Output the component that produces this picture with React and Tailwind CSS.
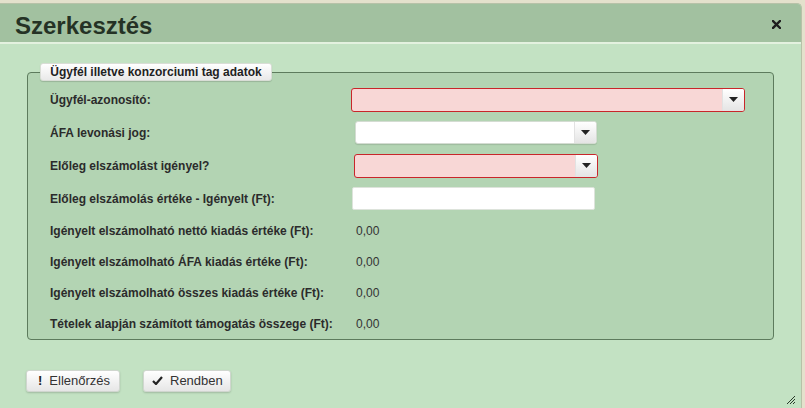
import React from "react";

const font = { fontFamily: '"Liberation Sans", Arial, sans-serif' };

function Caret() {
  return (
    <svg width="9" height="5" viewBox="0 0 9 5">
      <path d="M0 0 L9 0 L4.5 5 Z" fill="#222" />
    </svg>
  );
}

function Select({ invalid, className }) {
  return (
    <div
      className={`flex items-stretch rounded-[3px] border ${
        invalid
          ? "border-[#c8262a] bg-[#f8d7d6]"
          : "border-[#d4dcd2] bg-white shadow-[0_1px_1px_rgba(0,0,0,0.12)]"
      } ${className}`}
    >
      <div className="flex-1" />
      <div className="flex w-[22px] items-center justify-center rounded-r-[2px] border-l border-[#e2e2e2] bg-gradient-to-b from-[#ffffff] to-[#e4e4e4]">
        <Caret />
      </div>
    </div>
  );
}

function Row({ label, children, h }) {
  return (
    <div className={`flex items-center ${h}`}>
      <div className="w-[301px] shrink-0 text-[12px] font-bold text-[#2b2b2b]">{label}</div>
      {children}
    </div>
  );
}

function Btn({ icon, label, className }) {
  return (
    <div
      className={`flex h-[22px] items-center rounded-[3px] border border-[#d0d6cf] bg-gradient-to-b from-[#ffffff] to-[#e6e6e6] text-[13px] text-[#333] shadow-[0_1px_2px_rgba(0,0,0,0.18)] ${className}`}
    >
      {icon}
      <span>{label}</span>
    </div>
  );
}

export default function App() {
  return (
    <div className="h-[408px] w-[805px] overflow-hidden bg-[#e4e1cc] pt-[3px]" style={font}>
      <div className="relative h-[405px] w-[802px] overflow-hidden rounded-tr-[5px] border-r border-t border-[#b7c2a8] bg-[#c3e2c3]">
        {/* header */}
        <div className="flex h-[40px] items-center justify-between border-b-2 border-[#e3f1df] bg-[#a2c1a0] pl-[15px] pr-[20px]">
          <div className="mt-[6px] text-[24px] font-bold leading-none text-[#253225]">Szerkesztés</div>
          <svg width="9" height="9" viewBox="0 0 9 9" className="mt-[2px]">
            <path d="M1 1 L8 8 M8 1 L1 8" stroke="#1f1f1f" strokeWidth="2.4" strokeLinecap="square" />
          </svg>
        </div>

        {/* body */}
        <div className="px-[27px] pt-[28px]">
          <div className="relative w-[747px] rounded-[4px] border border-[#5d7b5d] bg-[#b3d4b3] pl-[22px] pt-[10px]">
            <div className="absolute left-[12px] top-[-10px] flex h-[18px] w-[232px] items-center justify-center whitespace-nowrap rounded-[3px] border border-[#d9ddd6] bg-gradient-to-b from-[#ffffff] to-[#e9e9e9] text-[12px] font-bold text-[#222] shadow-[0_1px_1px_rgba(0,0,0,0.15)]">
              Ügyfél illetve konzorciumi tag adatok
            </div>

            <Row label="Ügyfél-azonosító:" h="h-[33px]">
              <Select invalid className="h-[24px] w-[394px]" />
            </Row>
            <Row label="ÁFA levonási jog:" h="h-[33px]">
              <Select className="ml-[4px] h-[23px] w-[242px]" />
            </Row>
            <Row label="Előleg elszámolást igényel?" h="h-[33px]">
              <Select invalid className="ml-[3px] h-[24px] w-[244px]" />
            </Row>
            <Row label="Előleg elszámolás értéke - Igényelt (Ft):" h="h-[33px]">
              <div className="ml-[1px] h-[23px] w-[243px] rounded-[2px] border border-[#dde3db] bg-white" />
            </Row>
            <Row label="Igényelt elszámolható nettó kiadás értéke (Ft):" h="h-[31px]">
              <span className="ml-[5px] text-[12px] text-[#333]">0,00</span>
            </Row>
            <Row label="Igényelt elszámolható ÁFA kiadás értéke (Ft):" h="h-[31px]">
              <span className="ml-[5px] text-[12px] text-[#333]">0,00</span>
            </Row>
            <Row label="Igényelt elszámolható összes kiadás értéke (Ft):" h="h-[31px]">
              <span className="ml-[5px] text-[12px] text-[#333]">0,00</span>
            </Row>
            <Row label="Tételek alapján számított támogatás összege (Ft):" h="h-[31px]">
              <span className="ml-[5px] text-[12px] text-[#333]">0,00</span>
            </Row>
          </div>

          <div className="mt-[30px] flex gap-[23px]">
            <Btn
              className="-ml-[1px] w-[94px] pl-[11px]"
              icon={<span className="mr-[7px] text-[13px] font-bold text-[#222]">!</span>}
              label="Ellenőrzés"
            />
            <Btn
              className="w-[88px] pl-[8px]"
              icon={
                <svg width="11" height="9" viewBox="0 0 11 9" className="mb-[2px] mr-[7px]">
                  <path d="M1 5 L4 8 L10 1" fill="none" stroke="#222" strokeWidth="2.2" />
                </svg>
              }
              label="Rendben"
            />
          </div>
        </div>

        {/* resize handle */}
        <svg width="10" height="10" viewBox="0 0 10 10" className="absolute bottom-[3px] right-[5px]">
          <path d="M9 1 L1 9 M9 4 L4 9 M9 7 L7 9" stroke="#2a3a2a" strokeWidth="1" />
        </svg>
      </div>
    </div>
  );
}
